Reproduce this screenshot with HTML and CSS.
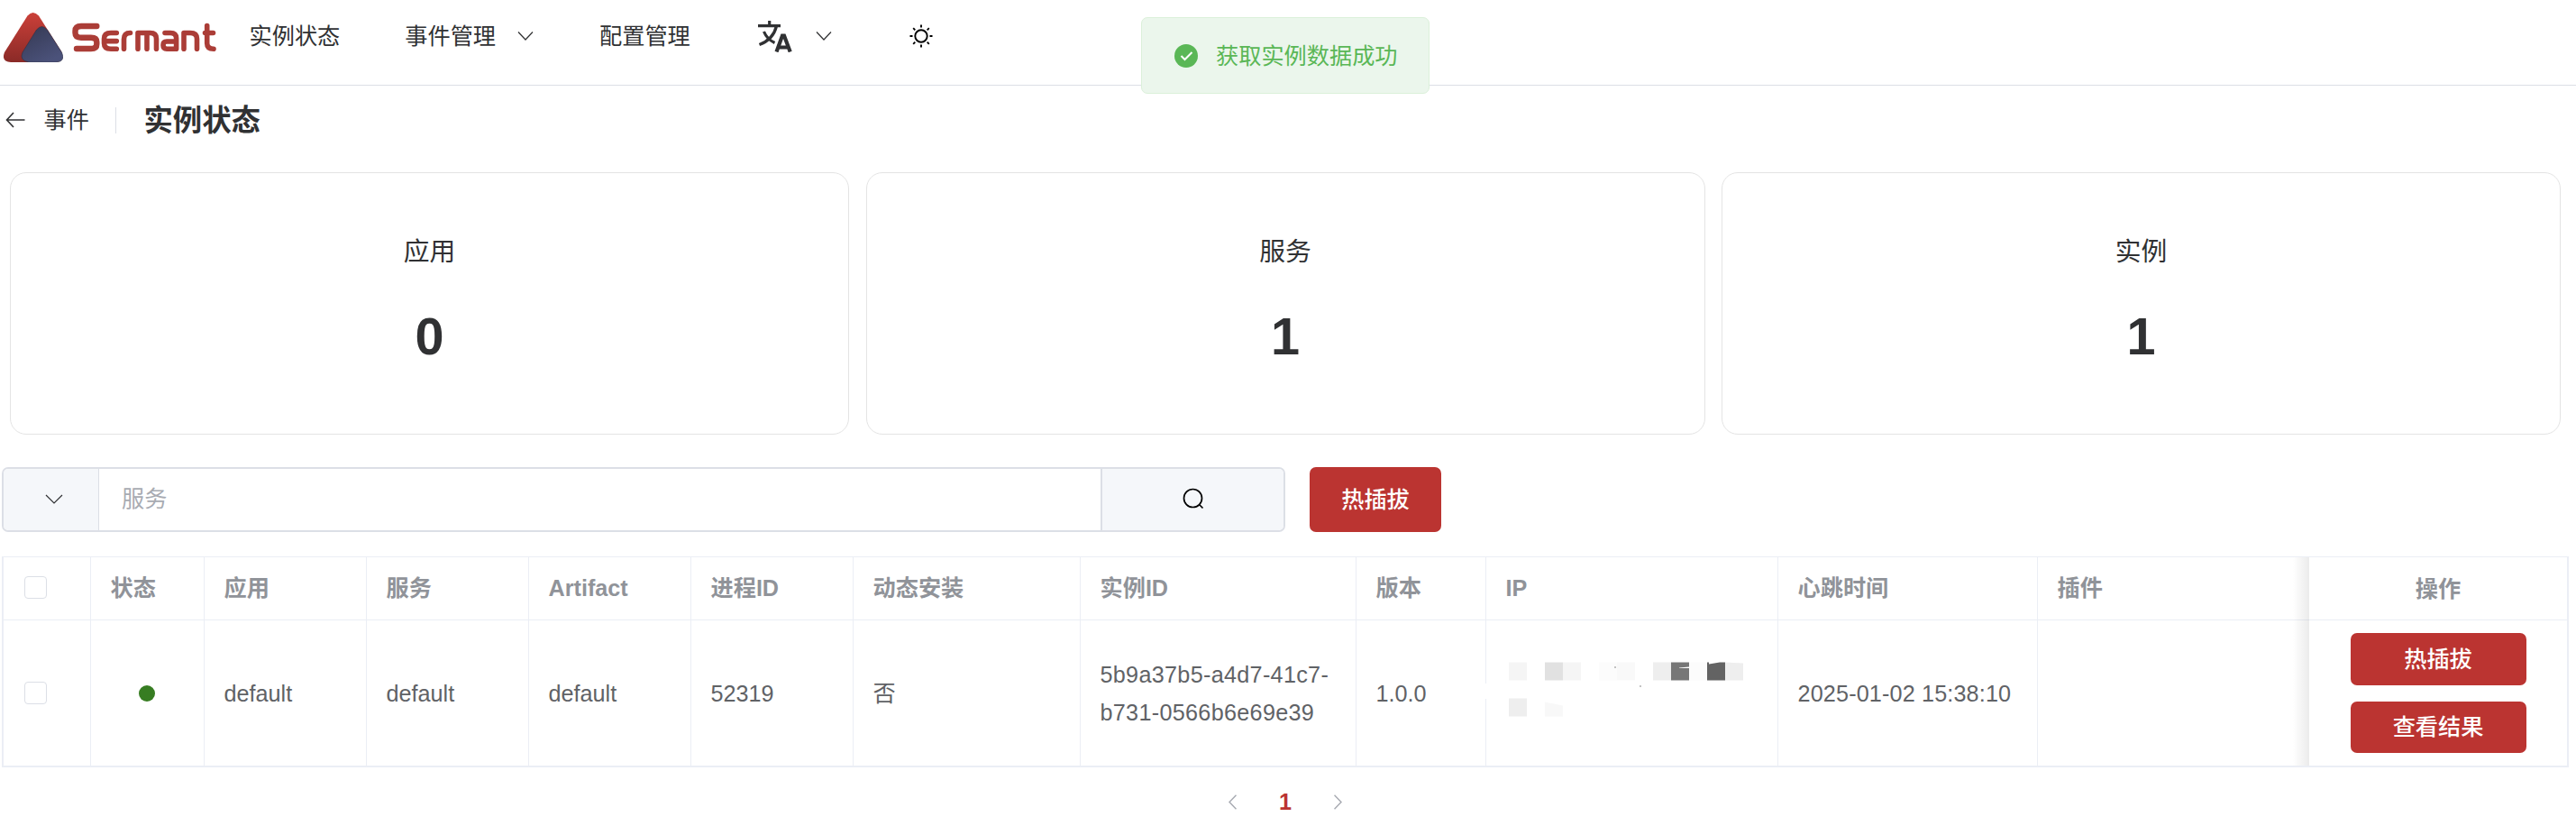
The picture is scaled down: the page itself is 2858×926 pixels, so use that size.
FILE: index.html
```html
<!DOCTYPE html>
<html lang="zh-CN">
<head>
<meta charset="utf-8">
<title>Sermant</title>
<link rel="stylesheet" href="styles.css">
</head>
<body>
<header class="nav">
  <svg class="logo-mark" viewBox="0 0 66 55">
    <defs>
      <linearGradient id="lr" x1="0" y1="0" x2="0" y2="1"><stop offset="0" stop-color="#cb4039"/><stop offset="1" stop-color="#8a2a27"/></linearGradient>
      <linearGradient id="lb" x1="0" y1="0" x2=".6" y2="1"><stop offset="0" stop-color="#343852"/><stop offset="1" stop-color="#4b527a"/></linearGradient>
    </defs>
    <path d="M26.500 3.500Q32.500-3.500 39 3.500L64 43Q68 54 58 55H8Q-3 54 1 44Z" fill="url(#lr)"/>
    <path d="M36.500 19Q42.500 12 48.500 19L64.500 44Q69 54 59 55H28Q17 53 21 44Z" fill="url(#lb)" stroke="#282b3f" stroke-width=".5"/>
  </svg>
  <svg class="logo-word" viewBox="0 0 162 33" role="img" aria-label="Sermant">
    <g fill="none" stroke="#ab3d37" stroke-width="5.6" stroke-linecap="round" stroke-linejoin="round">
      <path stroke-width="6.400" d="M27.300 4H10Q3.500 4 3.500 9.500V11.500Q3.500 16.700 10 16.700H21Q27.300 16.700 27.300 21.500V24Q27.300 29 21 29H5"/>
      <path d="M49.300 29.200H43Q35.500 29.200 35.500 23V18Q35.500 11.500 43 11.500H49.300M37 20.600H49.300"/>
      <path d="M57.500 29.200V18.500Q57.500 11.500 64.500 11.500"/>
      <path d="M73 29.200V11.500H86.500Q93.500 11.500 93.500 18V29.200M83 13V29.200"/>
      <path d="M103 11.500H109Q115.600 11.500 115.600 17.500V29.200H105Q101 29.200 101 25Q101 21 105 21H115"/>
      <path d="M124 29.200V11.500H131Q138.500 11.500 138.500 18V29.200"/>
      <path d="M149.700 3.500V23Q149.700 29.200 157 29.200M147.500 11.500H156.500"/>
    </g>
  </svg>
  <nav class="menu">
    <span class="m1">实例状态</span>
    <span class="m2">事件管理</span>
    <svg class="chev c1" viewBox="0 0 18 12"><path d="M1 1.500L9 10L17 1.500"/></svg>
    <span class="m3">配置管理</span>
    <svg class="lang" viewBox="0 0 38 35" fill="none" stroke="#303133"><path stroke-width="3.200" d="M0 5.600H25M12.700 0V5M20.500 6C18 16 11 23 1.500 26.500M6.500 12C9 18 13 22 18.500 24.500"/><path stroke-width="4.200" d="M20.500 34.500L27 16.500H29L35.700 34.500M23 29.500H34"/></svg>
    <svg class="chev c2" viewBox="0 0 18 12"><path d="M1 1.500L9 10L17 1.500"/></svg>
    <svg class="sun" viewBox="0 0 26 26" fill="none" stroke="#000" stroke-width="1.900"><circle cx="13" cy="13" r="6.700"/><path d="M13 .5V3.500M13 22.500V25.500M.5 13H3.500M22.500 13H25.500M4.200 4.200L6.300 6.300M19.700 19.700L21.800 21.800M4.200 21.800L6.300 19.700M19.700 6.300L21.800 4.200"/></svg>
  </nav>
</header>
<div class="toast">
  <svg viewBox="0 0 26 26"><circle cx="13" cy="13" r="13" fill="#5ab756"/><path d="M7.500 13L11.500 17L19.500 9" fill="none" stroke="#fff" stroke-width="2"/></svg>
  <span>获取实例数据成功</span>
</div>
<main>
  <div class="crumb">
    <svg viewBox="0 0 22 18" fill="none" stroke="#303133" stroke-width="1.600"><path d="M9 1L1.500 9L9 17M1.500 9H21.500"/></svg>
    <span class="back">事件</span><i></i><h1>实例状态</h1>
  </div>
  <section class="cards">
    <div class="card"><p>应用</p><b>0</b></div>
    <div class="card"><p>服务</p><b>1</b></div>
    <div class="card"><p>实例</p><b>1</b></div>
  </section>
  <div class="tools">
    <div class="search">
      <div class="pre"><svg class="chev" viewBox="0 0 20 12"><path d="M1 1L10 10L19 1"/></svg></div>
      <div class="field">服务</div>
      <div class="post"><svg viewBox="0 0 24 24" fill="none" stroke="#000" stroke-width="1.700"><circle cx="11.500" cy="11.500" r="10"/><path d="M18.500 18.500L22.500 22.500"/></svg></div>
    </div>
    <button class="btn hot">热插拔</button>
  </div>
  <div class="table">
    <div class="row head">
      <div><span class="box"></span></div><div>状态</div><div>应用</div><div>服务</div><div>Artifact</div><div>进程ID</div><div>动态安装</div><div>实例ID</div><div>版本</div><div>IP</div><div>心跳时间</div><div class="last">插件</div><div class="ops">操作</div>
    </div>
    <div class="row body">
      <div><span class="box"></span></div><div><span class="dot"></span></div><div>default</div><div>default</div><div>default</div><div>52319</div><div>否</div><div class="uuid">5b9a37b5-a4d7-41c7-<br>b731-0566b6e69e39</div><div class="ver">1.0.0</div>
      <div class="ip"><svg viewBox="0 -17.500 260 104"><path fill="#f5f5f5" d="M0 0h20v20H0zM60 0h20v20H60z"/><path fill="#e1e1e1" d="M40 0h20v20H40z"/><path fill="#fcfcfc" d="M100 0h20v20h-20zM200 0h20v20h-20z"/><path fill="#f9f9f9" d="M120 0h20v20h-20z"/><path fill="#eee" d="M160 0h20v20h-20zM240 0l20 1v19h-20zM0 40h20v20H0z"/><path fill="#777" d="M180 0h20v20h-20z"/><path fill="#636363" d="M220 0h2v2l12-2h6v20h-20z"/><path fill="#fff" d="M189 6l11-1v1.500h-11z"/><path fill="#f8f8f8" d="M40 44l20 4v12H40z"/><path fill="#888" d="M117 5h2v1h-2zM145 26h2v1h-2z"/></svg></div>
      <div class="time">2025-01-02 15:38:10</div><div class="last"></div>
      <div class="ops"><button class="btn">热插拔</button><button class="btn">查看结果</button></div>
    </div>
    <div class="shade"></div>
  </div>
  <div class="pager">
    <svg viewBox="0 0 9 17"><path d="M8.500 .8L1 8.500L8.500 16.200"/></svg><b>1</b><svg viewBox="0 0 9 17"><path d="M.5 .8L8 8.500L.5 16.200"/></svg>
  </div>
</main>
</body>
</html>
```

FILE: styles.css
```css
* { box-sizing: border-box; }
body { margin: 0; width: 2858px; height: 926px; overflow: hidden; background: #fff; color: #303133; font: 25.2px/42px "Liberation Sans", "Noto Sans CJK SC", sans-serif; }
p, h1 { margin: 0; }
svg { display: block; flex: none; }
.nav { display: flex; height: 95px; border-bottom: 1px solid #dcdfe6; }
.logo-mark { width: 66px; height: 55px; margin: 14px 0 0 4px; }
.logo-word { width: 162px; height: 33px; margin: 25px 0 0 10px; }
.menu { display: flex; align-items: center; height: 80px; }
.chev { width: 18px; height: 12px; fill: none; stroke: #303133; stroke-width: 1.2; }
.m1 { margin-left: 34.5px; }
.m2 { margin-left: 72px; }
.c1 { margin-left: 23.5px; }
.m3 { margin-left: 73.5px; }
.lang { width: 38px; height: 35px; margin-left: 75.5px; }
.c2 { margin-left: 26px; }
.sun { width: 26px; height: 26px; margin-left: 86px; }
.toast { position: absolute; left: 1266px; top: 19px; width: 320px; height: 85px; display: flex; align-items: center; padding-left: 36px; background: #ebf6ec; border: 1px solid #dbf0da; border-radius: 7px; color: #5ab756; }
.toast svg { width: 26px; height: 26px; margin-right: 20px; }
.crumb { display: flex; align-items: center; height: 76px; padding-left: 6px; }
.crumb svg { width: 22px; height: 18px; }
.back { margin-left: 20.5px; }
.crumb i { width: 1px; height: 29px; margin: 0 31px 0 29.5px; background: #dcdfe6; }
h1 { padding-top: 2px; font-size: 32.4px; margin-left: -1px; }
.cards { display: flex; gap: 18.5px; margin-top: 20px; padding: 0 17px 0 11px; }
.card { flex: 1; height: 291px; padding-top: 65px; border: 1px solid #e4e4e4; border-radius: 18px; text-align: center; }
.card p { font-size: 28.8px; line-height: 44px; }
.card b { display: block; margin-top: 39px; font-size: 57.6px; line-height: 66px; }
.tools { display: flex; margin: 36px 0 0 2px; height: 72px; }
.search { display: flex; width: 1424px; border: 2px solid #dcdfe6; border-radius: 7px; overflow: hidden; }
.pre, .post { display: flex; align-items: center; justify-content: center; background: #f5f7fa; }
.pre { width: 106px; border-right: 1px solid #dcdfe6; padding-left: 7px; }
.pre .chev { width: 20px; height: 12px; margin-bottom: 1px; }
.field { flex: 1; padding-left: 25px; line-height: 66px; color: #a8abb2; }
.post { width: 203px; border-left: 2px solid #dcdfe6; }
.post svg { width: 24px; height: 24px; margin: 0 0 2px 1px; }
.btn { border: 0; border-radius: 7px; background: #bb3431; color: #fff; font: 500 25.2px/30px "Liberation Sans", "Noto Sans CJK SC", sans-serif; padding: 0; }
.hot { width: 146px; height: 72px; margin-left: 27px; }
.table { position: relative; width: 2848px; height: 234px; margin: 27px 0 0 2px; border: solid #ebeef5; border-width: 1px 2px 2px; }
.row { display: grid; grid-template-columns: 97px 126px 180px 180px 180px 180px 252px 306px 144px 324px 288px 301px 1fr; }
.row > div { display: flex; align-items: center; padding-left: 21.5px; border-right: 1px solid #ebeef5; white-space: nowrap; }
.head { height: 70px; color: #909399; font-weight: 700; border-bottom: 1px solid #ebeef5; }
.head > div { padding-bottom: 2px; }
.body { height: 161px; color: #606266; }
.row > .last, .row > .ops { border-right: 0; }
.row > .ops { justify-content: center; padding: 0; }
.box { width: 25px; height: 25px; border: 1px solid #dcdfe6; border-radius: 4px; margin-left: 1.5px; }
.dot { width: 18px; height: 18px; margin-left: 31px; border-radius: 50%; background: #377d22; }
.body > .ver { border-image: linear-gradient(#ebeef5 70px, #fff 70px 87px, #ebeef5 87px) 1; border-style: solid; border-width: 0 1px 0 0; }
.uuid { letter-spacing: .3px; }
.time { letter-spacing: .15px; }
.ip svg { width: 260px; height: 104px; margin-left: 3.5px; }
.body .ops { flex-direction: column; gap: 18px; }
.ops .btn { width: 195px; height: 57.5px; }
.shade { position: absolute; left: 2540px; top: 0; width: 18px; height: 231px; background: linear-gradient(to right, #fff0, #00000014); }
.pager { display: flex; align-items: center; justify-content: center; height: 76px; padding-right: 6px; }
.pager b { width: 14px; margin: 0 47px; color: #bb3431; }
.pager svg { width: 9px; height: 17px; fill: none; stroke: #a8abb2; stroke-width: 1.5; }
```
